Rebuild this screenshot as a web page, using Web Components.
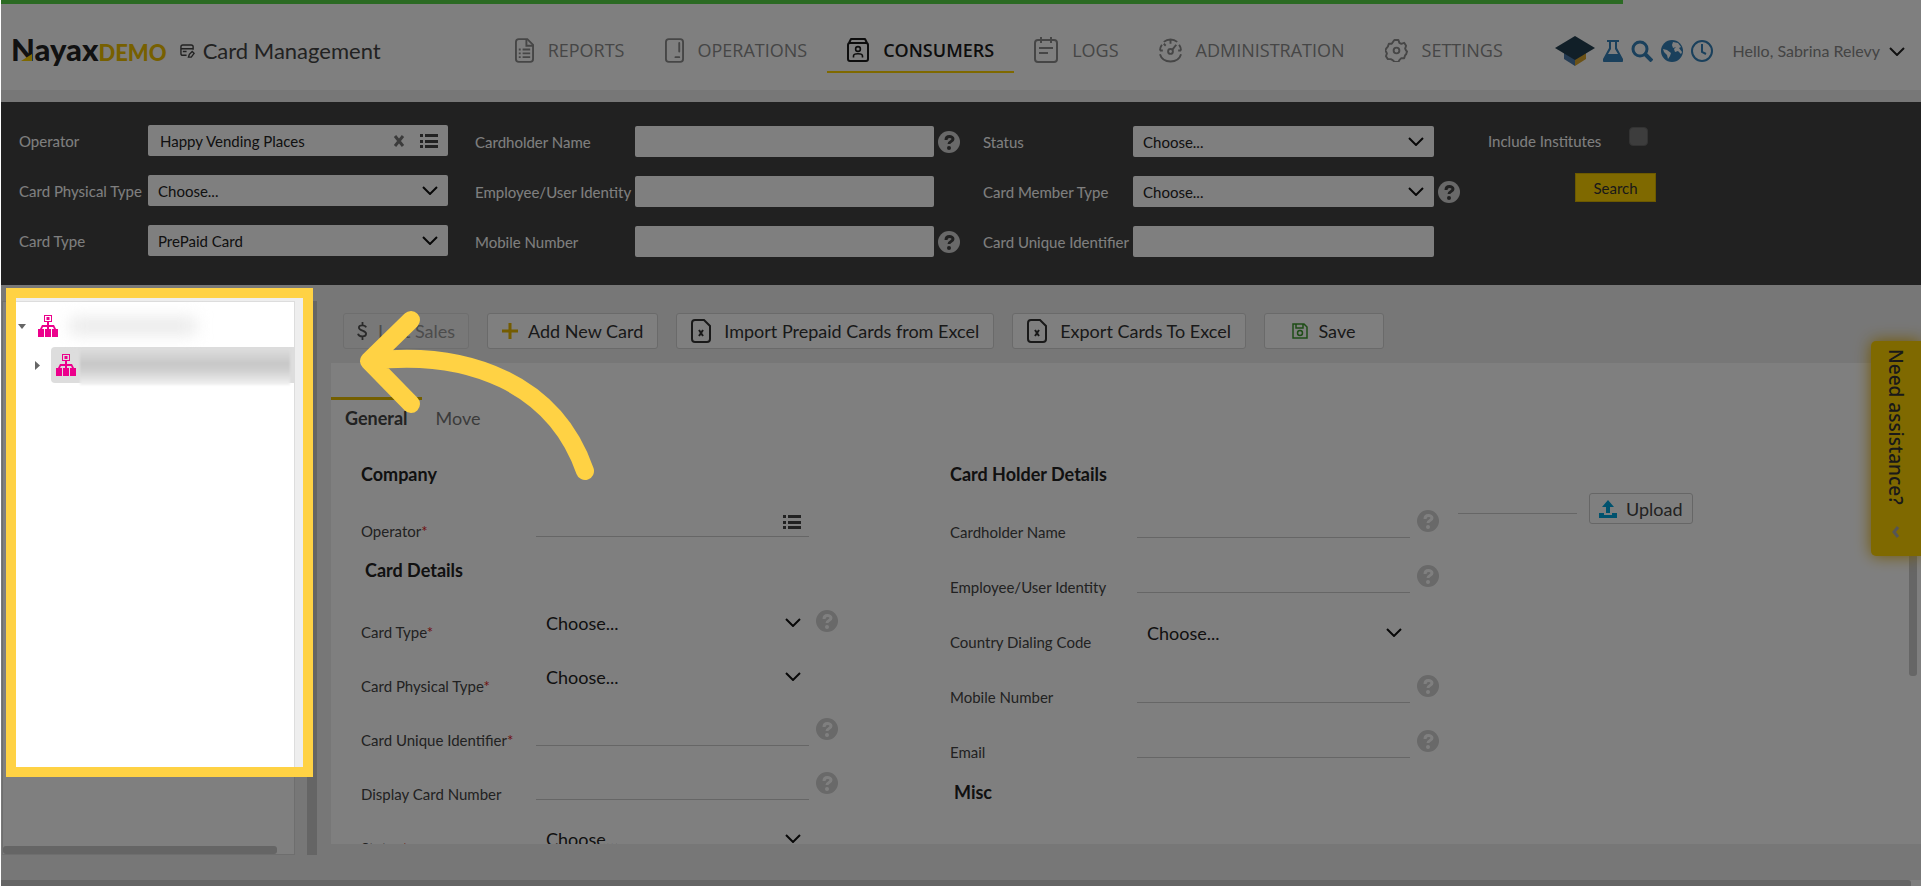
<!DOCTYPE html>
<html lang="en">
<head>
<meta charset="utf-8">
<title>Card Management</title>
<style>
    html, body {
        margin: 0;
        height: 100%;
        background: #fff;
        overflow: hidden;
        font-family: Lato, "Open Sans", sans-serif;
        color: #222;
    }
</style>
</head>
<body>

<nx-app>
    <nx-header slot="header"></nx-header>
    <nx-filter-bar slot="filter"></nx-filter-bar>
    <nx-tree slot="tree"></nx-tree>
    <nx-toolbar slot="toolbar"></nx-toolbar>
    <nx-card-form slot="form"></nx-card-form>
    <nx-assist slot="overlay">Need assistance?</nx-assist>
    <nx-spotlight slot="overlay"></nx-spotlight>
</nx-app>

<script>
const ICONS = {
    report: ['0 0 20 26', '<g fill="none" stroke="currentColor" stroke-width="2"><path d="M4 1h9l6 6v15a3 3 0 0 1-3 3H4a3 3 0 0 1-3-3V4a3 3 0 0 1 3-3z"/><path d="M12 1v7h7"/><path d="M8 12h8M8 16h8M8 20h8M4 12h2M4 16h2M4 20h2"/></g>'],
    machine: ['0 0 20 26', '<g fill="none" stroke="currentColor" stroke-width="2"><rect x="1" y="1" width="18" height="24" rx="3"/><path d="M15 5v9M11 20h4" stroke-linecap="round"/></g>'],
    consumers: ['0 0 22 24', '<g fill="none" stroke="currentColor" stroke-width="2"><rect x="1" y="5" width="20" height="18" rx="2"/><path d="M2 5l2-4h14l2 4" stroke-linejoin="round"/><g stroke-width="1.6"><circle cx="11" cy="11" r="2.4"/><path d="M6.500 19.500v-1.500c0-3 9-3 9 0v1.500"/></g></g>'],
    logs: ['0 0 24 26', '<g fill="none" stroke="currentColor" stroke-width="2"><rect x="1" y="3" width="22" height="22" rx="3"/><path d="M7 0v6M17 0v6M5 11h14M5 16h9"/></g>'],
    gauge: ['0 0 24 26', '<g fill="none" stroke="currentColor" stroke-width="2"><path d="M1 13a11 11 0 0 1 2-6M5 4a11 11 0 0 1 14 0M21 7a11 11 0 0 1 2 6M1 17c3 10 19 10 22 0M12 2v4M1 13h3M20 13h3M5 6l2 2"/><circle cx="12" cy="14" r="2.500"/><path d="M14 12l4-5"/></g>'],
    gear: ['0 0 24 24', '<g fill="none" stroke="currentColor" stroke-width="2"><path d="M9 2l1-1h4l1 3 2 1 3-1 2 3-1 3 1 2 1 1-1 3-1 1-1 3-3 0-2 2-1 2h-4l-2-2-2-1-3 0-2-3 1-3-1-2-1-1 2-3 1-1 1-3 3 0z" stroke-linejoin="round"/><circle cx="12" cy="12" r="3"/></g>'],
    card: ['0 0 16 16', '<g fill="none" stroke="currentColor" stroke-width="1.5"><path d="M14 6V3a2 2 0 0 0-2-2H3a2 2 0 0 0-2 2v7a2 2 0 0 0 2 2h4M1 5h13M3 8h4"/><path d="M9 14l1-3 3-3 2 2-3 4z"/></g>'],
    cap: ['0 0 40 30', '<path d="M9 15v8l11 7V18z" fill="#4a78a8"/><path d="M31 15v8l-11 7V18z" fill="#d9a52c"/><path d="M20 0l20 12-20 12L0 12z" fill="#223e50"/>'],
    flask: ['0 0 20 22', '<path fill="currentColor" fill-rule="evenodd" d="M4 0h12v2h-2v6l6 11c1 2 0 3-2 3H2c-2 0-3-1-2-3L6 8V2H4zM8 2v7l-3 5h10l-3-5V2z"/>'],
    search: ['0 0 22 22', '<g fill="none" stroke="currentColor"><circle cx="9" cy="9" r="7" stroke-width="3"/><path d="M14 14l7 7" stroke-width="4"/></g>'],
    globe: ['0 0 22 22', '<circle cx="11" cy="11" r="11" fill="currentColor"/><path fill="#fff" d="M12 2l5 1 3 4-2 1 3 4-1 2-3-3-3 1-1-3 2-2-3 1-1-3zM2 9l4 1 4 3-1 3-2 3-1-4-3-3z"/>'],
    clock: ['0 0 22 22', '<g fill="none" stroke="currentColor" stroke-width="2"><circle cx="11" cy="11" r="10"/><path d="M11 4v8l4 2"/></g>'],
    chevron: ['0 0 16 9', '<path d="M1 1l7 7 7-7" fill="none" stroke="currentColor" stroke-width="2"/>'],
    list: ['0 0 18 14', '<path fill="currentColor" d="M0 0h3v3H0zM5 0h13v3H5zM0 6h3v3H0zM5 6h13v3H5zM0 11h3v3H0zM5 11h13v3H5z"/>'],
    clear: ['0 0 12 12', '<path d="M2 1l8 10M10 1L2 11" fill="none" stroke="currentColor" stroke-width="3"/>'],
    help: ['0 0 22 22', '<circle cx="11" cy="11" r="11" fill="currentColor"/><path d="M8 9c0-5 7-4 7-1 0 3-4 2-4 5" fill="none" stroke="var(--mark, #fff)" stroke-width="3"/><circle cx="11" cy="17" r="2" fill="var(--mark, #fff)"/>'],
    dollar: ['0 0 12 20', '<path d="M10 6c-1-3-8-3-8 0 0 4 8 3 8 7 0 4-8 4-9 0M6 0v3M6 16v4" fill="none" stroke="currentColor" stroke-width="2"/>'],
    plus: ['0 0 16 16', '<path d="M8 0v16M0 8h16" stroke="currentColor" stroke-width="3"/>'],
    excel: ['0 0 20 24', '<path d="M4 1h9l6 6v13a3 3 0 0 1-3 3H4a3 3 0 0 1-3-3V4a3 3 0 0 1 3-3z" fill="none" stroke="currentColor" stroke-width="2"/><path d="M8 11l4 6M12 11l-4 6" stroke="currentColor" stroke-width="2"/>'],
    save: ['0 0 16 16', '<g fill="none" stroke="currentColor" stroke-width="1.5"><path d="M1 1h11l3 3v11H1zM4 1v4h7V1"/><circle cx="8" cy="10" r="2.5"/></g>'],
    upload: ['0 0 18 18', '<path fill="currentColor" d="M9 0l6 7h-4v6H7V7H3zM0 13h5v2h8v-2h5v5H0z"/>'],
    org: ['0 0 20 22', '<path fill="currentColor" fill-rule="evenodd" d="M6 0h8v7h-3v3h5l2 4h2v8h-6v-8h2l-1-2h-4v2h2v8H7v-8h2v-2H5l-1 2h2v8H0v-8h2l2-4h5V7H6zM7 1v5h6V1zM8.500 2v3h3V2z"/>'],
    down: ['0 0 8 5', '<path fill="currentColor" d="M0 0h8L4 5z"/>'],
    right: ['0 0 5 9', '<path fill="currentColor" d="M0 0l5 4.5L0 9z"/>'],
    left: ['0 0 8 12', '<path d="M6 1L2 6l4 5" fill="none" stroke="currentColor" stroke-width="3"/>']
}

function icon(name, width) {
    const [box, body] = ICONS[name]
    const [, , w, h] = box.split(' ').map(Number)
    const height = Math.round(width * h / w)
    return `<svg class="i-${name}" width="${width}" height="${height}" viewBox="${box}" aria-hidden="true">${body}</svg>`
}

const base = `
    :host, *, *::before, *::after { box-sizing: border-box; }
    button, input, select { font: inherit; color: inherit; margin: 0; }
    button { cursor: pointer; }
    svg { display: block; flex: none; }
`

class Base extends HTMLElement {
    constructor() {
        super()
        this.attachShadow({ mode: 'open' })
    }
    connectedCallback() {
        this.shadowRoot.innerHTML = `<style>${base}${this.css()}</style>${this.html()}`
    }
}


// page frame: header, filter, then tree | splitter | work area
class App extends Base {
    css() { return `
        :host {
            display: flex; flex-direction: column;
            position: relative;
            height: 100vh; margin: 0 1px;
            overflow: hidden;
            background: #eee;
        }
        .progress { height: 4px; width: 84.5%; background: #56d446; }
        .top { background: #fff; }
        main { flex: 1; display: flex; min-height: 0; padding-bottom: 36px; }
        aside { flex: none; width: 316px; padding: 16px 0 0 1px; display: flex; gap: 12px; margin-bottom: -11px; }
        ::slotted(nx-tree) { flex: 1; }
        .splitter { width: 10px; background: #cacaca; }
        section { flex: 1; min-width: 0; display: flex; flex-direction: column; padding-left: 14px; }
        ::slotted(nx-card-form) { flex: 1; min-height: 0; }
        .hscroll { height: 6px; background: #fff; }
        .hscroll div { height: 6px; width: 99.5%; background: #cacaca; border-radius: 0 3px 0 0; }
    ` }
    html() { return `
        <div class="top"><div class="progress"></div><slot name="header"></slot></div>
        <slot name="filter"></slot>
        <main>
            <aside><slot name="tree"></slot><div class="splitter"></div></aside>
            <section><slot name="toolbar"></slot><slot name="form"></slot></section>
        </main>
        <div class="hscroll"><div></div></div>
        <slot name="overlay"></slot>
    ` }
}
customElements.define('nx-app', App)


class NavItem extends Base {
    css() { return `
        :host { display: block; }
        a {
            display: flex; align-items: center; gap: 14px;
            height: 44px; padding: 0 20px;
            border-bottom: 2px solid transparent;
            font: 18px/24px "Open Sans", sans-serif;
            color: #8c8c8c; text-decoration: none;
        }
        :host([active]) a { color: #1a1a1a; border-color: #ffd200; font-weight: 600; }
    ` }
    html() { return `<a href="#">${icon(this.getAttribute('icon'), Number(this.getAttribute('size')))}<slot></slot></a>` }
}
customElements.define('nx-nav-item', NavItem)


class Header extends Base {
    css() { return `
        :host { display: block; }
        header {
            display: flex; align-items: center;
            height: 86px; padding: 8px 16px 0 10px;
        }
        .logo { display: flex; align-items: baseline; text-decoration: none; color: #222; }
        .logo b { position: relative; font-size: 31px; line-height: 36px; font-weight: 900; }
        .logo b::after {
            content: ""; position: absolute; left: 10px; top: 23px;
            width: 11px; height: 7px; background: #ffd200;
            clip-path: polygon(0 100%, 100% 0, 100% 100%);
        }
        .logo i { font-size: 22px; line-height: 36px; font-weight: 900; font-style: normal; color: #eec000; }
        h1 {
            display: flex; align-items: center; gap: 8px;
            margin: 0 0 0 13px;
            font-size: 22px; line-height: 28px; font-weight: 400; color: #444;
        }
        nav { display: flex; margin: 0 auto 0 114px; }
        .tools { display: flex; align-items: center; gap: 8px; color: #3480b8; }
        .tools button { padding: 0; border: 0; background: none; }
        .tools button.user {
            display: flex; align-items: center; gap: 9px;
            margin-left: 12px; font-size: 16px; line-height: 24px; color: #888;
        }
        .user svg { color: #222; }
        .strip { height: 12px; background: #eee; }
    ` }
    html() { return `
        <header>
            <a class="logo" href="#"><b>Nayax</b><i>DEMO</i></a>
            <h1>${icon('card', 15)}Card Management</h1>
            <nav>
                <nx-nav-item icon="report" size="19">REPORTS</nx-nav-item>
                <nx-nav-item icon="machine" size="19">OPERATIONS</nx-nav-item>
                <nx-nav-item icon="consumers" size="22" active>CONSUMERS</nx-nav-item>
                <nx-nav-item icon="logs" size="24">LOGS</nx-nav-item>
                <nx-nav-item icon="gauge" size="23">ADMINISTRATION</nx-nav-item>
                <nx-nav-item icon="gear" size="23">SETTINGS</nx-nav-item>
            </nav>
            <div class="tools">
                <button aria-label="Academy">${icon('cap', 40)}</button>
                <button aria-label="Labs">${icon('flask', 20)}</button>
                <button aria-label="Search">${icon('search', 22)}</button>
                <button aria-label="Language">${icon('globe', 22)}</button>
                <button aria-label="Time">${icon('clock', 22)}</button>
                <button class="user">Hello, Sabrina Relevy ${icon('chevron', 16)}</button>
            </div>
        </header>
        <div class="strip"></div>
    ` }
}
customElements.define('nx-header', Header)


// label + control + optional help mark
// type: text | select | lookup,  look: box (filter bar) | line (form)
class Field extends Base {
    css() { return `
        :host {
            display: grid;
            grid-template-columns: var(--label, 175px) minmax(0, 1fr) 22px;
            font-size: 15px; line-height: 20px;
        }
        label { white-space: nowrap; }
        em { font-style: normal; color: #e02020; }
        .control { display: flex; align-items: center; position: relative; height: 31px; }
        input, select {
            width: 100%; height: 100%;
            padding: 0 12px; border: 0; outline: 0;
            background: none; border-radius: 0; appearance: none;
            text-overflow: ellipsis;
        }
        .marks { position: absolute; right: 8px; display: flex; gap: 15px; align-items: center; color: #444; pointer-events: none; }
        .i-clear { color: #777; }
        .i-chevron { color: #111; }
        .help { padding: 0; border: 0; background: none; height: 22px; width: 22px; color: #d2d2d2; }

        :host([look=box]) { align-items: center; color: #fff; column-gap: 4px; }
        :host([look=box]) .control { background: #fff; color: #222; border-radius: 2px; }
        :host([look=box]) .marks { right: 10px; }
        :host([look=box]) select { padding: 0 10px; }
        :host([look=box]) .help { --mark: #424242; }

        :host([look=line]) { height: 35px; color: #444; column-gap: 7px; }
        :host([look=line]) label { align-self: end; margin-right: -7px; }
        :host([look=line]) .control { margin-left: -7px; }
        :host([look=line]) input { border-bottom: 1px solid #ccc; }
        :host([look=line]) select { font-size: 18px; padding: 0 10px; color: #222; }
        :host([look=line]) .help { margin-top: 3px; }
    ` }
    html() {
        const type = this.getAttribute('type') || 'text'
        const value = this.getAttribute('value') || ''
        const req = this.hasAttribute('required') ? '<em>*</em>' : ''
        let control = `<input id="c" type="text" value="${value}">`
        let marks = ''
        if(type == 'select') {
            control = `<select id="c"><option>${value || 'Choose...'}</option></select>`
            marks = icon('chevron', 16)
        }
        if(type == 'lookup') {
            marks = (value ? icon('clear', 12) : '') + icon('list', 18)
        }
        return `
            <label for="c">${this.getAttribute('label')}${req}</label>
            <div class="control">${control}<span class="marks">${marks}</span></div>
            ${this.hasAttribute('help') ? `<button class="help" aria-label="Help">${icon('help', 22)}</button>` : ''}
        `
    }
}
customElements.define('nx-field', Field)


class FilterBar extends Base {
    css() { return `
        :host {
            display: grid;
            grid-template-columns: 456fr 508fr 505fr 433fr;
            height: 183px; padding: 24px 0 0 18px;
            background: #424242; color: #fff;
            font-size: 15px; line-height: 20px;
        }
        .col { display: flex; flex-direction: column; gap: 19px; }
        .c1 { --label: 125px; margin-top: -1px; }
        .c2 { --label: 156px; padding-right: 23px; }
        .c3 { --label: 146px; padding-right: 28px; }
        .c1 nx-field { padding-right: 1px; }
        .check { display: flex; align-items: center; gap: 28px; height: 31px; margin-top: -1px; }
        .check input {
            appearance: none; width: 19px; height: 19px; margin: 0 0 8px;
            background: #7a7a7a; border: 1px solid #666; border-radius: 4px;
        }
        .search {
            align-self: start; width: 81px; height: 29px; margin: -2px 0 0 87px;
            background: #ffd200; border: 1px solid #d9b300; color: #333;
        }
    ` }
    html() { return `
        <div class="col c1">
            <nx-field look="box" type="lookup" label="Operator" value="Happy Vending Places"></nx-field>
            <nx-field look="box" type="select" label="Card Physical Type"></nx-field>
            <nx-field look="box" type="select" label="Card Type" value="PrePaid Card"></nx-field>
        </div>
        <div class="col c2">
            <nx-field look="box" label="Cardholder Name" help></nx-field>
            <nx-field look="box" label="Employee/User Identity"></nx-field>
            <nx-field look="box" label="Mobile Number" help></nx-field>
        </div>
        <div class="col c3">
            <nx-field look="box" type="select" label="Status"></nx-field>
            <nx-field look="box" type="select" label="Card Member Type" help></nx-field>
            <nx-field look="box" label="Card Unique Identifier"></nx-field>
        </div>
        <div class="col">
            <div class="check"><label for="inst">Include Institutes</label><input id="inst" type="checkbox"></div>
            <button class="search">Search</button>
        </div>
    ` }
}
customElements.define('nx-filter-bar', FilterBar)


// node names are redacted, so each one is only a soft grey smear
class Tree extends Base {
    css() { return `
        :host {
            display: flex; flex-direction: column;
            background: #fff; border: 1px solid #ddd;
            padding-top: 2px; color: #666;
        }
        .node { display: flex; align-items: center; height: 36px; }
        .root { padding-left: 15px; gap: 12px; margin: 4px 0 3px; }
        .child { padding-left: 32px; gap: 11px; }
        .i-org { color: #ec008c; }
        .row { flex: 1; display: flex; align-items: center; gap: 4px; height: 36px; padding-left: 5px; background: #ddd; border-radius: 4px 0 0 4px; }
        .smear { filter: blur(8px); }
        .root .smear { width: 126px; height: 16px; background: #e8e8e8; }
        .child .smear { flex: 1; height: 36px; filter: blur(1px); margin-top: 4px; margin-right: 4px; background: linear-gradient(#ddd, #c8c8c8 40%, #d0d0d0 60%, #f2f2f2); }
        .bar { margin-top: auto; width: 94%; height: 8px; background: #cacaca; border-radius: 3px; }
    ` }
    html() { return `
        <div class="node root">${icon('down', 8)}${icon('org', 20)}<div class="smear"></div></div>
        <div class="node child">${icon('right', 5)}<div class="row">${icon('org', 20)}<div class="smear"></div></div></div>
        <div class="bar"></div>
    ` }
}
customElements.define('nx-tree', Tree)


class Toolbar extends Base {
    css() { return `
        :host { display: flex; gap: 18px; padding: 28px 12px 14px; }
        button {
            display: flex; align-items: center; justify-content: center; gap: 10px;
            height: 36px; padding: 0 14px;
            background: #fff; border: 1px solid #d4d4d4; border-radius: 3px;
            font-size: 18px; line-height: 24px; color: #333; white-space: nowrap;
        }
        .xls { gap: 13px; }
        .last { min-width: 126px; padding: 0 12px; background: #f0f0f0; border-color: #ddd; color: #999; }
        .last svg { color: #555; }
        .save { min-width: 120px; }
        .i-plus { color: #e8b800; }
        .i-save { color: #3c9a2c; }
    ` }
    html() { return `
        <button class="last" disabled>${icon('dollar', 11)}Last Sales</button>
        <button>${icon('plus', 16)}Add New Card</button>
        <button class="xls">${icon('excel', 20)}Import Prepaid Cards from Excel</button>
        <button class="xls">${icon('excel', 20)}Export Cards To Excel</button>
        <button class="save">${icon('save', 16)}Save</button>
    ` }
}
customElements.define('nx-toolbar', Toolbar)


class CardForm extends Base {
    css() { return `
        :host { display: block; position: relative; overflow: hidden; background: #fff; }
        .tabs { display: flex; padding-top: 34px; }
        .tabs button {
            padding: 6px 14px 8px; background: none; border: 0;
            border-top: 3px solid transparent;
            font-size: 18px; line-height: 24px; color: #777;
        }
        .tabs button.on { min-width: 90px; border-color: #e8be00; color: #444; font-weight: 700; }
        form {
            display: grid; grid-template-columns: 477fr 112fr 489fr 482fr;
            padding: 24px 0 0 30px;
        }
        .col { display: flex; flex-direction: column; gap: 19px; }
        .right { grid-column: 3; --label: 187px; gap: 20px; }
        h3 { margin: 0 0 1px; font-size: 18px; line-height: 24px; font-weight: 700; color: #222; }
        h3.sub { margin: -2px 0 6px; padding-left: 4px; }
        .photo { display: flex; gap: 12px; padding: 31px 0 0 19px; align-items: flex-start; }
        .photo input { width: 119px; height: 21px; padding: 0; border: 0; border-bottom: 1px solid #ccc; background: none; }
        .photo button {
            display: flex; align-items: center; gap: 9px;
            height: 31px; padding: 0 9px;
            background: #fff; border: 1px solid #ccc; border-radius: 3px;
            font-size: 18px; line-height: 24px; color: #444;
        }
        .photo svg { color: #00a4dc; }
        .vscroll { position: absolute; right: 4px; top: 40px; width: 8px; height: 273px; background: #ccc; border-radius: 3px; }
    ` }
    html() { return `
        <div class="tabs"><button class="on">General</button><button>Move</button></div>
        <form>
            <div class="col">
                <h3>Company</h3>
                <nx-field look="line" type="lookup" label="Operator" required></nx-field>
                <h3 class="sub">Card Details</h3>
                <nx-field look="line" type="select" label="Card Type" required help></nx-field>
                <nx-field look="line" type="select" label="Card Physical Type" required></nx-field>
                <nx-field look="line" label="Card Unique Identifier" required help></nx-field>
                <nx-field look="line" label="Display Card Number" help></nx-field>
                <nx-field look="line" type="select" label="Status" required></nx-field>
            </div>
            <div class="col right">
                <h3>Card Holder Details</h3>
                <nx-field look="line" label="Cardholder Name" help></nx-field>
                <nx-field look="line" label="Employee/User Identity" help></nx-field>
                <nx-field look="line" type="select" label="Country Dialing Code"></nx-field>
                <nx-field look="line" label="Mobile Number" help></nx-field>
                <nx-field look="line" label="Email" help></nx-field>
                <h3 class="sub">Misc</h3>
            </div>
            <div class="photo">
                <input type="text" aria-label="Photo file">
                <button type="button">${icon('upload', 18)}Upload</button>
            </div>
        </form>
        <div class="vscroll"></div>
    ` }
}
customElements.define('nx-card-form', CardForm)


class Assist extends Base {
    css() { return `
        :host { position: absolute; right: 0; top: 341px; }
        button {
            display: flex; align-items: center; justify-content: space-between;
            writing-mode: vertical-rl;
            width: 50px; height: 215px; padding: 8px 0 18px;
            background: #ffd200; border: 0; border-radius: 5px 0 0 5px;
            box-shadow: 0 0 16px #e6b000;
            font: 500 19px/24px "Noto Sans", sans-serif; color: #333;
        }
        svg { color: #aaa; }
    ` }
    html() { return `<button><slot></slot>${icon('left', 8)}</button>` }
}
customElements.define('nx-assist', Assist)


// dims everything outside its frame with one huge shadow
class Spotlight extends Base {
    css() { return `
        :host { position: absolute; inset: 0; overflow: hidden; pointer-events: none; }
        .frame {
            position: absolute; left: 5px; top: 288px; width: 307px; height: 489px;
            border: 10px solid #ffd244;
            box-shadow: 0 0 0 4000px rgba(0, 0, 0, .5);
        }
        svg { position: absolute; left: 350px; top: 300px; }
    ` }
    html() { return `
        <div class="frame"></div>
        <svg width="260" height="200" viewBox="351 300 260 200" aria-hidden="true">
            <path d="M411 320L369 361L411 404M369 361C470 349 555 385 585 471" fill="none" stroke="#ffd244" stroke-width="18" stroke-linecap="round" stroke-linejoin="round"/>
        </svg>
    ` }
}
customElements.define('nx-spotlight', Spotlight)
</script>
</body>
</html>
